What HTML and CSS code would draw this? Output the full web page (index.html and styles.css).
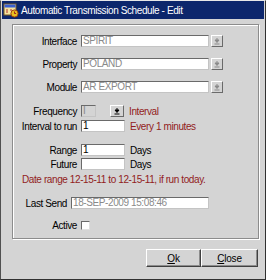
FILE: index.html
```html
<!DOCTYPE html>
<html lang="en">
<head>
    <meta charset="UTF-8">
    <title>Automatic Transmission Schedule - Edit</title>
    <link rel="stylesheet" href="styles.css">
</head>
<body>

    <div class="window">
        <div class="titlebar">
            <svg class="app-icon" width="16" height="16" viewBox="0 0 16 16">
                <rect x="1" y="2" width="12" height="11" fill="#f4e4a0" stroke="#7a5a20"/>
                <rect x="1.5" y="2.5" width="11" height="3" fill="#3a5fd0"/>
                <path d="M3 8h2M3 10h2M7 8h2" stroke="#b03030" stroke-width="1.2"/>
                <circle cx="11.5" cy="11.5" r="3.6" fill="#e8c020" stroke="#a04010"/>
                <path d="M11.5 9.5v2h1.6" stroke="#a02020" fill="none"/>
            </svg>
            <span>Automatic Transmission Schedule - Edit</span>
        </div>

        <div class="group">
            <div class="row">
                <span class="lbl">Interface</span>
                <div class="field combo disabled">SPIRIT</div>
                <span class="drop off"><svg width="8" height="8" viewBox="0 0 8 8"><path d="M4 1v2M2 3h4L4 5.5z M1.5 7h5" stroke="currentColor" fill="currentColor"/></svg></span>
            </div>
            <div class="row gap11">
                <span class="lbl">Property</span>
                <div class="field combo disabled">POLAND</div>
                <span class="drop off"><svg width="8" height="8" viewBox="0 0 8 8"><path d="M4 1v2M2 3h4L4 5.5z M1.5 7h5" stroke="currentColor" fill="currentColor"/></svg></span>
            </div>
            <div class="row gap11">
                <span class="lbl">Module</span>
                <div class="field combo disabled">AR EXPORT</div>
                <span class="drop off"><svg width="8" height="8" viewBox="0 0 8 8"><path d="M4 1v2M2 3h4L4 5.5z M1.5 7h5" stroke="currentColor" fill="currentColor"/></svg></span>
            </div>

            <div class="row gap12">
                <span class="lbl">Frequency</span>
                <div class="field tiny greyed">I</div>
                <span class="drop big"><svg width="8" height="8" viewBox="0 0 8 8"><path d="M4 1v2M2 3h4L4 5.5z M1.5 7h5" stroke="currentColor" fill="currentColor"/></svg></span>
                <span class="note">Interval</span>
            </div>
            <div class="row gap3">
                <span class="lbl">Interval to run</span>
                <div class="field short">1</div>
                <span class="note">Every 1 minutes</span>
            </div>

            <div class="row gap12">
                <span class="lbl">Range</span>
                <div class="field short">1</div>
                <span class="unit">Days</span>
            </div>
            <div class="row gap2">
                <span class="lbl">Future</span>
                <div class="field short"></div>
                <span class="unit">Days</span>
            </div>
            <p class="range-note">Date range 12-15-11 to 12-15-11, if run today.</p>

            <div class="row gap11">
                <span class="lbl lbl-narrow">Last Send</span>
                <div class="field stamp disabled">18-SEP-2009 15:08:46</div>
            </div>
            <div class="row gap10">
                <span class="lbl">Active</span>
                <span class="check"></span>
            </div>
        </div>

        <div class="actions">
            <button class="btn"><u>O</u>k</button>
            <button class="btn btn-close"><u>C</u>lose</button>
        </div>
    </div>

</body>
</html>
```

FILE: styles.css
```css
body {
    margin: 0;
    font-family: "Liberation Sans", Arial, sans-serif;
    font-size: 10px;
    letter-spacing: -0.4px;
    color: #000;
    background: #d4d4d4;
}
.window {
    width: 266px;
    height: 280px;
    box-sizing: border-box;
    background-color: #d4d4d4;
    border: 1px solid;
    border-color: #e8e8e8 #303030 #303030 #505050;
    padding: 0 1px;
}
.titlebar {
    height: 18px;
    background-color: #0c266c;
    color: white;
    display: flex;
    align-items: center;
    gap: 2px;
    padding-left: 1px;
    font-size: 10px;
}
.app-icon {
    flex: none;
}
.group {
    margin: 5px 0 0 10px;
    width: 247px;
    box-sizing: border-box;
    border: 1px solid #8c8c8c;
    box-shadow: inset 1px 1px #fff, 1px 1px #fff;
    padding: 10px 0 7px 0;
}
.row {
    display: flex;
    align-items: center;
    height: 12px;
}
.gap2 { margin-top: 2px; }
.gap3 { margin-top: 3px; }
.gap10 { margin-top: 10px; }
.gap11 { margin-top: 11px; }
.gap12 { margin-top: 12px; }
.lbl {
    width: 64px;
    margin-right: 4px;
    text-align: right;
    white-space: nowrap;
}
.lbl-narrow {
    width: 54px;
}
.field {
    height: 12px;
    box-sizing: border-box;
    background-color: white;
    border: 1px solid;
    border-color: #6a6a6a #c4c4c4 #c4c4c4 #6a6a6a;
    padding: 0 1px;
    line-height: 10px;
    white-space: nowrap;
    overflow: hidden;
}
.disabled {
    color: #8a8a8a;
}
.greyed {
    background-color: #d4d4d4;
    color: #8a8a8a;
}
.combo { width: 128px; }
.tiny { width: 15px; }
.short { width: 44px; }
.stamp { width: 138px; }
.drop {
    width: 12px;
    height: 12px;
    box-sizing: border-box;
    margin-left: 2px;
    background-color: #d4d4d4;
    border: 1px solid;
    border-color: #fff #6a6a6a #6a6a6a #fff;
    display: flex;
    align-items: center;
    justify-content: center;
    color: #000;
}
.drop.off {
    color: #8a8a8a;
}
.drop.big {
    width: 14px;
    margin-left: 14px;
}
.note {
    margin-left: 5px;
    color: #921c1c;
    white-space: nowrap;
}
.unit {
    margin-left: 5px;
}
.range-note {
    margin: 4px 0 0 9px;
    height: 12px;
    line-height: 12px;
    color: #921c1c;
    white-space: nowrap;
}
.check {
    width: 9px;
    height: 9px;
    box-sizing: border-box;
    background-color: white;
    border: 1px solid;
    border-color: #6a6a6a #e0e0e0 #e0e0e0 #6a6a6a;
}
.actions {
    display: flex;
    justify-content: flex-end;
    margin: 10px 6px 0 0;
}
.btn {
    width: 55px;
    height: 18px;
    padding: 0;
    font-family: "Liberation Sans", Arial, sans-serif;
    font-size: 10px;
    letter-spacing: -0.2px;
    background-color: #d4d4d4;
    border: 1px solid;
    border-color: #fff #404040 #404040 #fff;
    box-shadow: inset -1px -1px #8c8c8c;
}
.btn-close {
    width: 57px;
}
```
